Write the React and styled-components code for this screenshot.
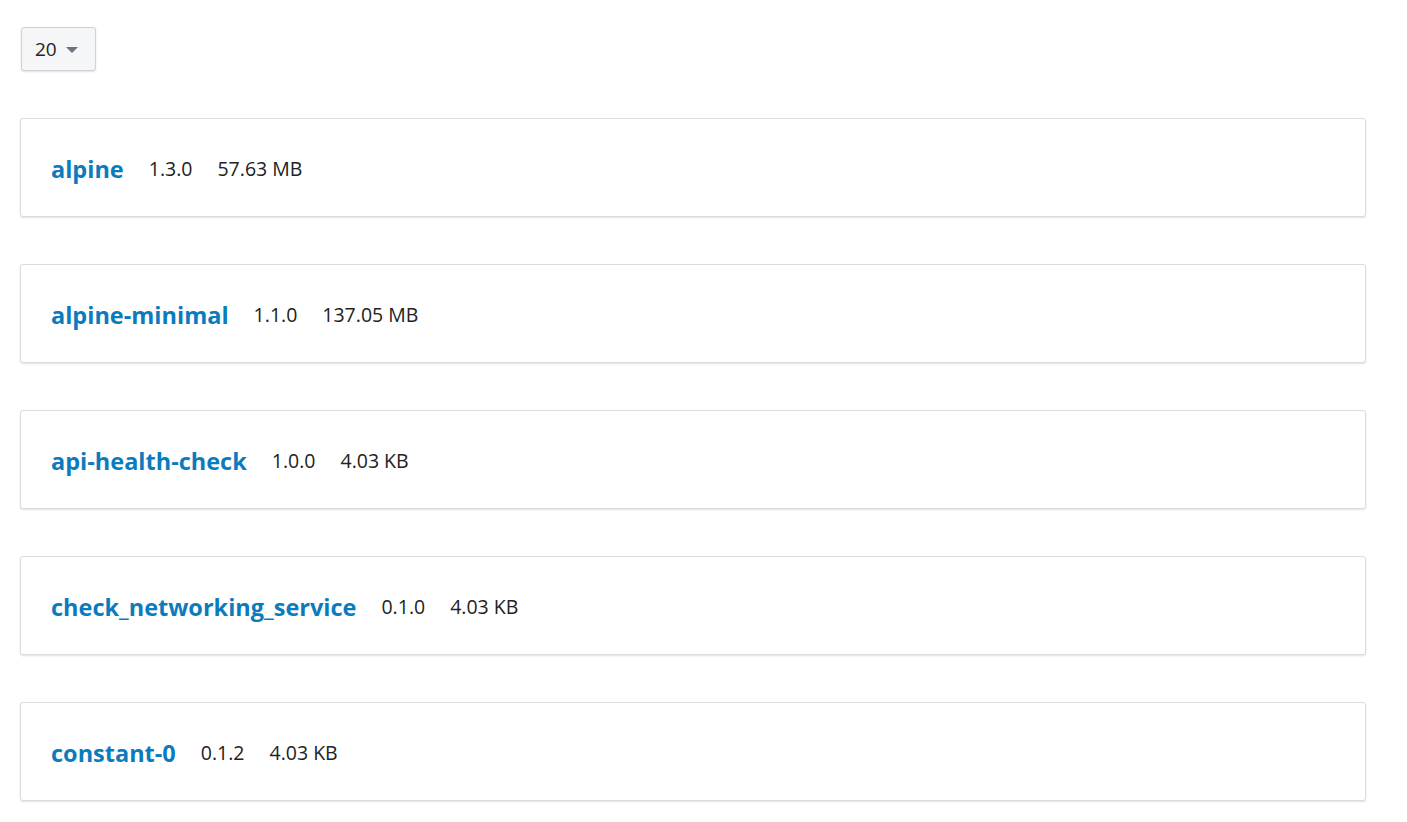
import React from 'react';
import styled, { createGlobalStyle } from 'styled-components';

const GlobalStyle = createGlobalStyle`
  html, body {
    margin: 0;
    padding: 0;
    background: #ffffff;
    font-family: "Open Sans", "Noto Sans", sans-serif;
    color: #222;
  }
`;

const Page = styled.div`
  padding: 27px 41px 20px 20px;
`;

const PageSize = styled.button`
  display: flex;
  align-items: center;
  gap: 9px;
  height: 44px;
  width: 75px;
  margin-left: 1px;
  padding: 0 0 0 13px;
  background: #f5f6f8;
  border: 1px solid #cfd2d6;
  border-radius: 3px;
  box-shadow: 0 1px 2px rgba(0, 0, 0, 0.12);
  font-family: inherit;
  font-size: 19px;
  color: #222;
  cursor: pointer;
`;

const Caret = styled.span`
  width: 0;
  height: 0;
  border-left: 6px solid transparent;
  border-right: 6px solid transparent;
  border-top: 6px solid #6b7280;
  margin-top: 2px;
`;

const List = styled.div`
  display: flex;
  flex-direction: column;
  gap: 47px;
  margin-top: 47px;
`;

const Card = styled.div`
  display: flex;
  align-items: center;
  gap: 25px;
  height: 99px;
  box-sizing: border-box;
  padding: 2px 30px 0;
  border: 1px solid #dcdcdc;
  border-radius: 3px;
  box-shadow: 0 1px 2px rgba(0, 0, 0, 0.12);
  background: #fff;
`;

const Name = styled.a`
  font-size: 23.5px;
  font-weight: 700;
  color: #0b7bbd;
  text-decoration: none;
`;

const Meta = styled.span`
  font-size: 19.5px;
  color: #222;
`;

const charts = [
  { name: 'alpine', version: '1.3.0', size: '57.63 MB' },
  { name: 'alpine-minimal', version: '1.1.0', size: '137.05 MB' },
  { name: 'api-health-check', version: '1.0.0', size: '4.03 KB' },
  { name: 'check_networking_service', version: '0.1.0', size: '4.03 KB' },
  { name: 'constant-0', version: '0.1.2', size: '4.03 KB' },
];

export default () => {
  return (
    <Page>
      <GlobalStyle />
      <PageSize>
        20 <Caret />
      </PageSize>
      <List>
        {charts.map((chart) => (
          <Card key={chart.name}>
            <Name href="#">{chart.name}</Name>
            <Meta>{chart.version}</Meta>
            <Meta>{chart.size}</Meta>
          </Card>
        ))}
      </List>
    </Page>
  );
};
